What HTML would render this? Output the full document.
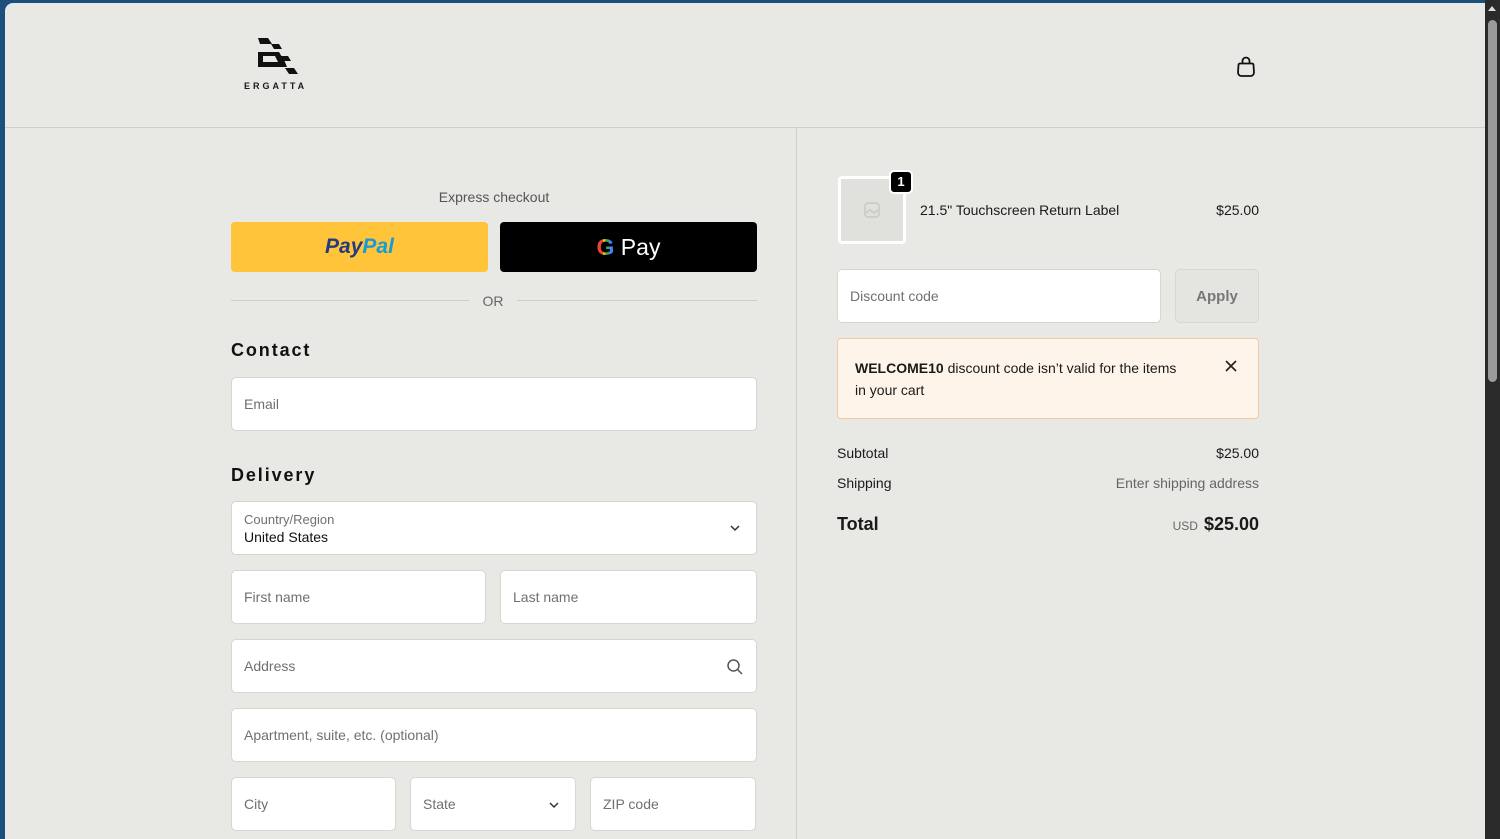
<!DOCTYPE html>
<html><head><meta charset="utf-8">
<style>
*{box-sizing:border-box;margin:0;padding:0}
html,body{width:1500px;height:839px;overflow:hidden;background:#1d4f7c;font-family:"Liberation Sans",sans-serif;color:#1a1a1a}
.page{position:absolute;left:5px;top:3px;width:1480px;height:836px;background:#e8e8e4;border-top-left-radius:8px;overflow:hidden}
.sb{position:absolute;left:1485px;top:0;width:15px;height:839px;background:#2a2a2a}
.sb .th{position:absolute;left:3px;top:20px;width:9px;height:362px;background:#9a9a9a;border-radius:5px}
.sb .ar{position:absolute;left:3px;top:6px;width:0;height:0;border-left:4px solid transparent;border-right:4px solid transparent;border-bottom:5px solid #ddd}
.hdr{position:absolute;left:0;top:0;width:1480px;height:125px;border-bottom:1px solid #cfcfca}
.vline{position:absolute;left:791px;top:125px;width:1px;height:720px;background:#cfcfca}
.abs{position:absolute}
.inp{position:absolute;background:#fff;border:1px solid #d6d6d2;border-radius:5px;font-size:14px;color:#707070;padding-left:12px;display:flex;align-items:center}
h2{position:absolute;font-size:18px;font-weight:700;letter-spacing:1.9px;color:#111}
.small{font-size:14px}
</style></head><body>
<div class="page">
 <div class="hdr">
  <svg class="abs" style="left:250px;top:33px" width="46" height="40" viewBox="0 0 46 40">
   <polygon points="3,2 13,2 17,8 5,8" fill="#111"/>
   <polygon points="16,8 24,8 27,13 19,13" fill="#111"/>
   <path d="M3 16H24L30 26L32 31H3Z M8 20V26H23L20 20Z" fill="#111" fill-rule="evenodd"/>
   <polygon points="26,20 33,20 36,25 29,25" fill="#111"/>
   <polygon points="30,32 39,32 43,38 34,38" fill="#111"/>
  </svg>
  <div class="abs" style="left:239px;top:78px;font-size:9px;font-weight:700;letter-spacing:3px">ERGATTA</div>
  <svg class="abs" style="left:1230px;top:51px" width="22" height="24" viewBox="0 0 22 24"><path d="M7.5 9.5V7a3.5 3.5 0 0 1 7 0v2.5M5 9.5h12a1.5 1.5 0 0 1 1.5 1.5l.5 7.5a3.5 3.5 0 0 1-3.5 3.5h-9A3.5 3.5 0 0 1 3 18.5L3.5 11A1.5 1.5 0 0 1 5 9.5z" fill="none" stroke="#111" stroke-width="1.8" stroke-linejoin="round"/></svg>
 </div>
 <div class="vline"></div>

 <div class="abs small" style="left:226px;top:186px;width:526px;text-align:center;color:#555">Express checkout</div>
 <div class="abs" style="left:226px;top:219px;width:257px;height:50px;background:#ffc439;border-radius:4px;text-align:center;line-height:50px;font-size:21px;font-weight:700;font-style:italic"><span style="color:#253b80">Pay</span><span style="color:#179bd7">Pal</span></div>
 <div class="abs" style="left:495px;top:219px;width:257px;height:50px;background:#000;border-radius:4px;text-align:center;line-height:50px;font-size:23px;color:#fff"><span style="font-weight:700;background:linear-gradient(90deg,#ea4335 0 35%,#fbbc05 35% 50%,#34a853 50% 70%,#4285f4 70%);-webkit-background-clip:text;color:transparent">G</span> Pay</div>
 <div class="abs" style="left:226px;top:297px;width:238px;height:1px;background:#cfcfca"></div>
 <div class="abs" style="left:512px;top:297px;width:240px;height:1px;background:#cfcfca"></div>
 <div class="abs small" style="left:464px;top:290px;width:48px;text-align:center;color:#666">OR</div>

 <h2 style="left:226px;top:337px">Contact</h2>
 <div class="inp" style="left:226px;top:374px;width:526px;height:54px">Email</div>
 <h2 style="left:226px;top:462px">Delivery</h2>
 <div class="inp" style="left:226px;top:498px;width:526px;height:54px;display:block;padding-top:10px"><div style="font-size:13px;color:#707070">Country/Region</div><div style="color:#111;margin-top:2px">United States</div>
  <svg class="abs" style="left:497px;top:22px" width="12" height="8" viewBox="0 0 12 8"><path d="M2 2l4 4 4-4" fill="none" stroke="#333" stroke-width="1.5"/></svg></div>
 <div class="inp" style="left:226px;top:567px;width:255px;height:54px">First name</div>
 <div class="inp" style="left:495px;top:567px;width:257px;height:54px">Last name</div>
 <div class="inp" style="left:226px;top:636px;width:526px;height:54px">Address
  <svg class="abs" style="left:494px;top:18px" width="18" height="18" viewBox="0 0 18 18"><circle cx="7.5" cy="7.5" r="5.5" fill="none" stroke="#555" stroke-width="1.5"/><path d="M11.5 11.5l4.5 4.5" stroke="#555" stroke-width="1.5"/></svg></div>
 <div class="inp" style="left:226px;top:705px;width:526px;height:54px">Apartment, suite, etc. (optional)</div>
 <div class="inp" style="left:226px;top:774px;width:165px;height:54px">City</div>
 <div class="inp" style="left:405px;top:774px;width:166px;height:54px">State
  <svg class="abs" style="left:137px;top:23px" width="12" height="8" viewBox="0 0 12 8"><path d="M2 2l4 4 4-4" fill="none" stroke="#333" stroke-width="1.5"/></svg></div>
 <div class="inp" style="left:585px;top:774px;width:166px;height:54px">ZIP code</div>

 <div class="abs" style="left:833px;top:173px;width:68px;height:68px;background:#e0e0dc;border:3px solid #fff;border-radius:4px"></div>
 <svg class="abs" style="left:858px;top:198px" width="18" height="18" viewBox="0 0 18 18"><rect x="2" y="2" width="14" height="14" rx="3" fill="none" stroke="#c8c8c4" stroke-width="1.5"/><path d="M3 12l4-3 4 3 4-3" fill="none" stroke="#c8c8c4" stroke-width="1.5"/></svg>
 <div class="abs" style="left:884px;top:167px;width:24px;height:24px;background:#000;border:2px solid #fff;border-radius:5px;color:#fff;font-size:13px;font-weight:700;text-align:center;line-height:20px">1</div>
 <div class="abs small" style="left:915px;top:199px">21.5" Touchscreen Return Label</div>
 <div class="abs small" style="left:1150px;top:199px;width:104px;text-align:right">$25.00</div>

 <div class="inp" style="left:832px;top:266px;width:324px;height:54px">Discount code</div>
 <div class="abs" style="left:1170px;top:266px;width:84px;height:54px;background:#e4e4e0;border:1px solid #d6d6d2;border-radius:5px;text-align:center;line-height:54px;font-size:15px;font-weight:700;color:#777">Apply</div>

 <div class="abs" style="left:832px;top:335px;width:422px;height:81px;background:#fff4ea;border:1px solid #f5c8a0;border-radius:4px"></div>
 <div class="abs small" style="left:850px;top:354px;width:330px;line-height:22px"><b>WELCOME10</b> discount code isn’t valid for the items in your cart</div>
 <svg class="abs" style="left:1219px;top:356px" width="14" height="14" viewBox="0 0 14 14"><path d="M2 2l10 10M12 2L2 12" stroke="#222" stroke-width="1.7"/></svg>

 <div class="abs small" style="left:832px;top:442px">Subtotal</div>
 <div class="abs small" style="left:1150px;top:442px;width:104px;text-align:right">$25.00</div>
 <div class="abs small" style="left:832px;top:472px">Shipping</div>
 <div class="abs small" style="left:1050px;top:472px;width:204px;text-align:right;color:#666">Enter shipping address</div>
 <div class="abs" style="left:832px;top:511px;font-size:18px;font-weight:700">Total</div>
 <div class="abs" style="left:1100px;top:511px;width:154px;text-align:right;font-size:18px;font-weight:700"><span style="font-size:12px;font-weight:400;color:#666;margin-right:6px">USD</span>$25.00</div>
</div>
<div class="sb"><div class="ar"></div><div class="th"></div></div>
</body></html>
